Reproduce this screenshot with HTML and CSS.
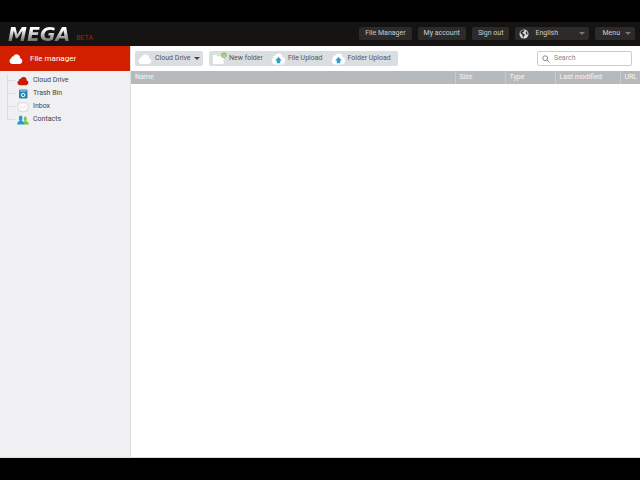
FILE: index.html
```html
<!DOCTYPE html>
<html lang="en">
<head>
    <meta charset="UTF-8">
    <meta name="viewport" content="width=device-width, initial-scale=1.0">
    <title>MEGA - File manager</title>
    <link rel="stylesheet" href="styles.css">
</head>
<body>
    <svg class="defs" aria-hidden="true">
        <symbol id="cloud" viewBox="0 0 14 10">
            <path d="M3 10a3 3 0 0 1-.7-5.700C2.300 3 3.300 2.300 4.300 2.500A3.600 3.600 0 0 1 11.200 4.200 3 3 0 0 1 11 10z"/>
        </symbol>
        <symbol id="upload" viewBox="0 0 15 14">
            <path fill="#fff" d="M4 12.500a3.500 3.500 0 0 1-2-6.300A2.500 2.500 0 0 1 4.500 3.600a3.700 3.700 0 0 1 7 1.200A4 4 0 0 1 11 12.500z"/>
            <path fill="#2b9fd4" d="M7.500 5l3.300 3.500H9.200v2.700H5.800V8.500H4.200z"/>
        </symbol>
    </svg>

    <header class="header">
        <a class="logo" href="#">MEGA</a>
        <span class="beta">BETA</span>
        <div class="top-nav">
            <button class="top-btn">File Manager</button>
            <button class="top-btn">My account</button>
            <button class="top-btn">Sign out</button>
            <div class="lang">
                <svg class="globe" viewBox="0 0 10 10" aria-hidden="true">
                    <circle cx="5" cy="5" r="4.500" fill="#ddd"/>
                    <path fill="#333" d="M3.500 1l2 .2-.4 1.400-1.300.6-.2 1.300 1.600.3.700 1.200-1 1.300-.3 1.500-1-.9-.3-1.900-1.500-1.300L1.300 3zM7.200 2l1.300 1.700L8.400 6l-1.100-.8-.7-1.500z"/>
                </svg>
                <select class="lang-select" aria-label="Language">
                    <option>English</option>
                </select>
                <span class="arrow"></span>
            </div>
            <button class="top-btn menu-btn" aria-haspopup="true">Menu <span class="arrow"></span></button>
        </div>
    </header>

    <div class="main">
        <aside class="sidebar">
            <h1 class="side-title">
                <svg class="title-icon"><use href="#cloud"/></svg>
                File manager
            </h1>
            <ul class="tree">
                <li><a href="#">
                    <svg class="tree-icon red"><use href="#cloud"/></svg>
                    Cloud Drive
                </a></li>
                <li><a href="#">
                    <svg class="tree-icon" viewBox="0 0 12 10"><rect x="2" y=".5" width="8.500" height="9" rx="1" fill="#2583b5"/><path fill="#d5eaf5" d="M3 1.500h6.500v.8H3z"/><circle cx="6.200" cy="6" r="1.700" fill="none" stroke="#fff"/></svg>
                    Trash Bin
                </a></li>
                <li><a href="#">
                    <svg class="tree-icon" viewBox="0 0 12 10"><rect x="1" y="1" width="10" height="8" rx="1" fill="#fff" stroke="#ccc" stroke-width=".7"/><path d="M1.500 2.500L6 6l4.500-3.500M1.500 8.500L4.500 5M10.500 8.500L7.500 5" fill="none" stroke="#ccc" stroke-width=".6"/></svg>
                    Inbox
                </a></li>
                <li><a href="#">
                    <svg class="tree-icon" viewBox="0 0 12 10"><path fill="#7fc241" d="M6.500 9.500c0-2 .2-2.800 1.200-3.200C6.300 4 6.800 1.600 8.300 1.600S10.200 4 9.200 6.300c2 .6 2.600 1 2.600 3.200z"/><path fill="#1e9bd7" d="M.3 9.500c0-2.200.5-2.800 2.300-3.500C1.300 3.500 2 .6 3.700.6S6.100 3.500 4.800 6C6.800 6.700 7.500 7.300 7.500 9.500z"/></svg>
                    Contacts
                </a></li>
            </ul>
        </aside>

        <main class="content">
            <div class="toolbar">
                <div class="tool-group">
                    <svg class="drive-icon"><use href="#cloud"/></svg>
                    <select class="drive-select" aria-label="Location">
                        <option>Cloud Drive</option>
                    </select>
                    <span class="arrow dark"></span>
                </div>
                <div class="tool-group">
                    <button class="tool-btn">
                        <svg class="tool-icon" viewBox="0 0 15 14"><path fill="#fff" stroke="#ccd0d2" stroke-width=".5" d="M.5 2.500h4l1 1.500H12v8.500H.5z"/><circle cx="12" cy="3.200" r="2.100" fill="#fff" stroke="#7ebd42" stroke-width="1.200"/><path d="M12 2v2.400M10.800 3.200h2.400" stroke="#7ebd42" stroke-width=".8"/></svg>
                        New folder
                    </button>
                    <button class="tool-btn">
                        <svg class="tool-icon"><use href="#upload"/></svg>
                        File Upload
                    </button>
                    <button class="tool-btn">
                        <svg class="tool-icon"><use href="#upload"/></svg>
                        Folder Upload
                    </button>
                </div>
                <label class="search">
                    <svg class="search-icon" viewBox="0 0 8 8" aria-hidden="true"><circle cx="3.200" cy="3.200" r="2.400"/><path d="M5 5l2.500 2.500"/></svg>
                    <input type="text" placeholder="Search" aria-label="Search">
                </label>
            </div>
            <table class="files">
                <thead>
                    <tr>
                        <th>Name</th>
                        <th class="col-size">Size</th>
                        <th class="col-type">Type</th>
                        <th class="col-date">Last modified</th>
                        <th class="col-url">URL</th>
                    </tr>
                </thead>
            </table>
        </main>
    </div>
</body>
</html>
```
FILE: styles.css
```css
* {
    box-sizing: border-box;
}
body {
    display: flex;
    flex-direction: column;
    height: 100vh;
    margin: 0;
    padding: 22px 0;
    background: #000;
    color: #444;
    font-family: Roboto, "Open Sans", sans-serif;
    font-size: 7px;
    line-height: 13px;
}
button, select, input {
    margin: 0;
    padding: 0;
    border: 0;
    background: none;
    color: inherit;
    font: inherit;
}
select {
    appearance: none;
}
a {
    color: inherit;
    text-decoration: none;
}
svg {
    flex: none;
}
.defs {
    position: absolute;
    width: 0;
    height: 0;
}
.arrow {
    border: 3px solid transparent;
    border-top-color: #777;
    border-bottom: 0;
    pointer-events: none;
}
.arrow.dark {
    border-top-color: #444;
}

/* header */
.header {
    display: flex;
    flex: none;
    align-items: center;
    height: 24px;
    padding: 0 5px 1px 8px;
    background: #151412;
}
.logo {
    background: linear-gradient(#fff 30%, #777 80%);
    background-clip: text;
    -webkit-background-clip: text;
    color: transparent;
    font: italic bold 19px/22px "DejaVu Sans", sans-serif;
}
.beta {
    padding: 9px 0 0 6px;
    color: #a32016;
}
.top-nav {
    display: flex;
    gap: 6px;
    margin-left: auto;
    color: #ccc;
}
.top-btn, .lang {
    display: flex;
    align-items: center;
    height: 13px;
    padding: 0 6px;
    border-radius: 2px;
    background: #2c2b29;
}
.lang {
    width: 74px;
    padding: 0 4px;
}
.globe {
    width: 10px;
    height: 10px;
    margin-right: 6px;
}
.lang-select {
    flex: 1;
    min-width: 0;
}
.menu-btn {
    gap: 5px;
    padding: 0 4px 0 7px;
}

.main {
    display: flex;
    flex: 1;
    min-height: 0;
    border-bottom: 1px solid #ddd;
}

/* sidebar */
.sidebar {
    flex: none;
    width: 131px;
    border-right: 1px solid #ddd;
    background: #f0f0f2;
}
.side-title {
    display: flex;
    align-items: center;
    gap: 7px;
    height: 25px;
    margin: 0 0 3px;
    padding-left: 9px;
    background: #d21f00;
    color: #fff;
    font-size: 8px;
    font-weight: normal;
}
.title-icon, .drive-icon {
    width: 14px;
    height: 10px;
    fill: #fff;
}
.tree {
    margin: 0 0 0 7px;
    padding: 0;
    list-style: none;
}
.tree li {
    border-left: 1px solid #ddd;
}
.tree li:last-child {
    height: 7px;
}
.tree a {
    display: flex;
    align-items: center;
    height: 13px;
}
.tree a::before {
    content: "";
    width: 7px;
    margin-right: 2px;
    border-top: 1px solid #ddd;
}
.tree-icon {
    width: 12px;
    height: 10px;
    margin-right: 4px;
}
.tree-icon.red {
    fill: #cc1b05;
}

/* file list */
.content {
    flex: 1;
    min-width: 0;
    background: #fff;
}
.toolbar {
    display: flex;
    align-items: center;
    gap: 6px;
    height: 25px;
    padding: 0 8px 0 4px;
}
.tool-group {
    display: flex;
    align-items: center;
    height: 15px;
    padding: 0 3px;
    border-radius: 2px;
    background: #dbdee1;
    color: #555;
}
.drive-select {
    width: 36px;
    margin: 0 3px;
}
.tool-btn {
    display: flex;
    align-items: center;
    gap: 2px;
    padding-right: 4px;
}
.tool-btn + .tool-btn {
    padding-left: 4px;
}
.tool-icon {
    width: 15px;
    height: 14px;
}
.search {
    display: flex;
    align-items: center;
    gap: 4px;
    width: 95px;
    height: 15px;
    margin-left: auto;
    padding: 0 4px;
    border: 1px solid #ccc;
    border-radius: 2px;
}
.search input {
    flex: 1;
    min-width: 0;
}
.search input::placeholder {
    color: #888;
}
.search-icon {
    width: 8px;
    height: 8px;
    fill: none;
    stroke: #888;
}
.files {
    width: 100%;
    border-collapse: collapse;
    table-layout: fixed;
    background: #b6babd;
}
.files th {
    height: 13px;
    padding: 0 4px;
    color: #f5f5f5;
    font-weight: normal;
    text-align: left;
    white-space: nowrap;
}
.files th + th {
    border-left: 1px solid #c8cbcd;
}
.col-size, .col-type {
    width: 50px;
}
.col-date {
    width: 65px;
}
.col-url {
    width: 20px;
}
```
